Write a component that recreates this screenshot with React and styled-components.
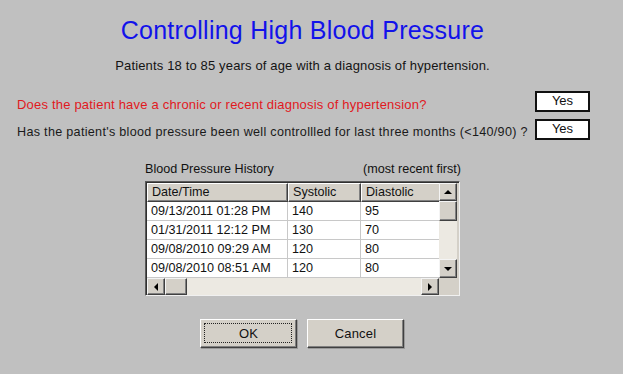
import React from 'react';
import styled, { createGlobalStyle } from 'styled-components';

const GlobalStyle = createGlobalStyle`
  html, body {
    margin: 0;
    padding: 0;
    background: #c0c0c0;
    font-family: Arial, "Liberation Sans", sans-serif;
  }
`;

const Page = styled.div`
  width: 623px;
  height: 374px;
  overflow: hidden;
  background: #c0c0c0;
  display: flex;
  flex-direction: column;
`;

const Title = styled.h1`
  margin: 16px 18px 0 0;
  font-size: 25px;
  letter-spacing: 0.25px;
  line-height: 29px;
  font-weight: normal;
  text-align: center;
  color: #1212ea;
`;

const Subtitle = styled.div`
  margin: 13px 18px 0 0;
  font-size: 13px;
  letter-spacing: 0.15px;
  line-height: 16px;
  text-align: center;
  color: #141414;
`;

const Questions = styled.div`
  margin: 17px 33px 0 17px;
  display: flex;
  flex-direction: column;
  gap: 7px;
`;

const QuestionRow = styled.div`
  display: flex;
  align-items: flex-end;
  justify-content: space-between;
`;

const QuestionText = styled.span`
  font-size: ${(p) => (p.$alert ? '13px' : '12.6px')};
  letter-spacing: ${(p) => (p.$alert ? '0.2px' : '0.3px')};
  line-height: 15px;
  color: ${(p) => (p.$alert ? '#e0191e' : '#1a1a1a')};
`;

const AnswerBox = styled.div`
  width: 51px;
  height: 17px;
  border: 2px solid #111;
  background: #fff;
  font-size: 13px;
  line-height: 16px;
  text-align: center;
  color: #111;
`;

const History = styled.div`
  margin: 22px 0 0 145px;
  width: 316px;
`;

const Caption = styled.div`
  display: flex;
  justify-content: space-between;
  font-size: 12.6px;
  line-height: 14px;
  color: #111;
  margin-bottom: 5px;
`;

const Grid = styled.div`
  width: 312px;
  border: 1px solid #5a5a5a;
  border-right-color: #f0f0f0;
  border-bottom-color: #f0f0f0;
  box-shadow: inset 1px 1px 0 #303030;
  padding: 1px 0 0 1px;
  display: grid;
  grid-template-columns: 292px 18px;
  grid-template-rows: 95px 17px;
  background: #d4d0c8;
`;

const Viewport = styled.div`
  overflow: hidden;
  background: #fff;
`;

const Row = styled.div`
  display: grid;
  grid-template-columns: 141px 73px 90px;
  height: 19px;
`;

const HeadCell = styled.div`
  box-sizing: border-box;
  background: #d4d0c8;
  border-top: 1px solid #fff;
  border-left: 1px solid #fff;
  border-right: 1px solid #404040;
  border-bottom: 1px solid #404040;
  box-shadow: inset -1px -1px 0 #808080;
  padding-left: 4px;
  font-size: 12.6px;
  line-height: 16px;
  color: #111;
`;

const Cell = styled.div`
  box-sizing: border-box;
  border-right: 1px solid #c8c8c8;
  border-bottom: 1px solid #c8c8c8;
  padding-left: 4px;
  font-size: 12.6px;
  line-height: 18px;
  color: #111;
  white-space: nowrap;
`;

const ScrollBar = styled.div`
  display: flex;
  flex-direction: ${(p) => (p.$vertical ? 'column' : 'row')};
  background: #ece9e2;
`;

const ScrollButton = styled.div`
  box-sizing: border-box;
  flex: 0 0 ${(p) => p.$size}px;
  background: #d4d0c8;
  border-top: 1px solid #f4f4f4;
  border-left: 1px solid #f4f4f4;
  border-right: 1px solid #404040;
  border-bottom: 1px solid #404040;
  box-shadow: inset -1px -1px 0 #808080;
  display: flex;
  align-items: center;
  justify-content: center;
`;

const Track = styled.div`
  flex: 1;
  background: #ece9e2;
`;

const Corner = styled.div`
  background: #d4d0c8;
`;

const Buttons = styled.div`
  margin: 23px 0 0 200px;
  display: flex;
  gap: 10px;
`;

const Button = styled.div`
  position: relative;
  box-sizing: border-box;
  width: 97px;
  height: 29px;
  background: #d4d0c8;
  border-top: 1px solid #fff;
  border-left: 1px solid #fff;
  border-right: 1px solid #404040;
  border-bottom: 1px solid #404040;
  box-shadow: inset -1px -1px 0 #808080, 1px 1px 0 #9a9a9a;
  display: flex;
  align-items: center;
  justify-content: center;
  font-size: 13px;
  letter-spacing: 0.2px;
  color: #111;
`;

const FocusRing = styled.div`
  position: absolute;
  inset: 3px 4px 4px 3px;
  border: 1px dotted #222;
`;

const Arrow = ({ dir }) => {
  const pts = {
    up: '0,5 4,1 8,5',
    down: '0,1 4,5 8,1',
    left: '5,0 1,4 5,8',
    right: '1,0 5,4 1,8',
  }[dir];
  const vertical = dir === 'up' || dir === 'down';
  return (
    <svg width={vertical ? 8 : 6} height={vertical ? 6 : 8} viewBox={vertical ? '0 0 8 6' : '0 0 6 8'}>
      <polygon points={pts} fill="#000" />
    </svg>
  );
};

const history = [
  ['09/13/2011 01:28 PM', '140', '95'],
  ['01/31/2011 12:12 PM', '130', '70'],
  ['09/08/2010 09:29 AM', '120', '80'],
  ['09/08/2010 08:51 AM', '120', '80'],
];

export default function App() {
  return (
    <Page>
      <GlobalStyle />
      <Title>Controlling High Blood Pressure</Title>
      <Subtitle>Patients 18 to 85 years of age with a diagnosis of hypertension.</Subtitle>
      <Questions>
        <QuestionRow>
          <QuestionText $alert>Does the patient have a chronic or recent diagnosis of hypertension?</QuestionText>
          <AnswerBox>Yes</AnswerBox>
        </QuestionRow>
        <QuestionRow>
          <QuestionText>Has the patient's blood pressure been well controllled for last three months (&lt;140/90) ?</QuestionText>
          <AnswerBox>Yes</AnswerBox>
        </QuestionRow>
      </Questions>
      <History>
        <Caption>
          <span>Blood Pressure History</span>
          <span>(most recent first)</span>
        </Caption>
        <Grid>
          <Viewport>
            <Row>
              <HeadCell>Date/Time</HeadCell>
              <HeadCell>Systolic</HeadCell>
              <HeadCell>Diastolic</HeadCell>
            </Row>
            {history.map((r, i) => (
              <Row key={i}>
                {r.map((v, j) => (
                  <Cell key={j}>{v}</Cell>
                ))}
              </Row>
            ))}
          </Viewport>
          <ScrollBar $vertical>
            <ScrollButton $size={18}>
              <Arrow dir="up" />
            </ScrollButton>
            <ScrollButton $size={20} />
            <Track />
            <ScrollButton $size={19}>
              <Arrow dir="down" />
            </ScrollButton>
          </ScrollBar>
          <ScrollBar>
            <ScrollButton $size={18}>
              <Arrow dir="left" />
            </ScrollButton>
            <ScrollButton $size={22} />
            <Track />
            <ScrollButton $size={18}>
              <Arrow dir="right" />
            </ScrollButton>
          </ScrollBar>
          <Corner />
        </Grid>
      </History>
      <Buttons>
        <Button>
          <FocusRing />
          OK
        </Button>
        <Button>Cancel</Button>
      </Buttons>
    </Page>
  );
}
